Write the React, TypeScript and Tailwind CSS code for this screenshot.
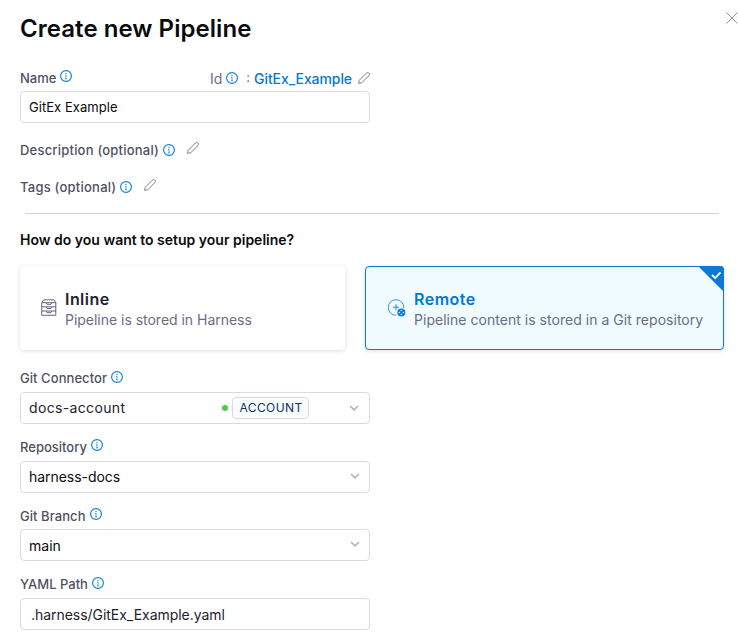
import type { ReactNode } from "react";

function Info() {
  return (
    <svg width="12" height="12" viewBox="0 0 12 12" fill="none" className="shrink-0">
      <circle cx="6" cy="6" r="5.4" stroke="#0e7fdc" strokeWidth="1.15" />
      <path d="M6 5V9M5 5.3H6M4.9 8.8H7.1" stroke="#3d97e3" strokeWidth="0.9" />
      <path d="M6 2.9V4.1" stroke="#2489de" strokeWidth="1.2" />
    </svg>
  );
}

function Pencil() {
  return (
    <svg width="12" height="12" viewBox="0 0 12 12" fill="none" stroke="#77778e" strokeWidth="0.95" strokeLinejoin="round" className="shrink-0">
      <path d="M0.6 11.4L1.2 8.3L8.4 1.1C9.1 0.4 10 0.4 10.6 0.9L11.1 1.4C11.7 2 11.7 2.8 11 3.5L3.8 10.7L0.6 11.4Z" />
    </svg>
  );
}

function Chevron() {
  return (
    <svg width="10" height="6" viewBox="0 0 10 6" fill="none" className="shrink-0">
      <path d="M1 1L5 4.8L9 1" stroke="#b0b1c4" strokeWidth="1.6" />
    </svg>
  );
}

function Drawers() {
  return (
    <svg width="16" height="17" viewBox="0 0 16 17" fill="none" stroke="#5c5e76" strokeWidth="0.95" className="mb-px shrink-0">
      <path d="M0.7 3.5L2.8 0.8H12.8L14.8 3.5V16.3H0.7Z" />
      <path d="M1 3.7H15M1 7.8H15M1 12H15" />
      <path d="M5.4 4L6 5.3H10L10.6 4M5.4 8L6 9.5H10L10.6 8M5.4 12.2L6 13.7H10L10.6 12.2" />
    </svg>
  );
}

function RemoteIcon() {
  return (
    <svg width="18" height="18" viewBox="0 0 18 18" fill="none" className="shrink-0">
      <path d="M8 16.3A7.8 7.8 0 1 1 15.8 9" stroke="#2788dc" strokeWidth="0.9" />
      <path d="M8 5.2V11.2M5 8.2H11" stroke="#2788dc" strokeWidth="1" />
      <circle cx="13.3" cy="13.5" r="4" fill="#0e78d5" />
      <g fill="#effbff">
        <circle cx="13.3" cy="11.4" r="0.75" />
        <circle cx="13.3" cy="15.6" r="0.75" />
        <circle cx="11.2" cy="13.5" r="0.75" />
        <circle cx="15.4" cy="13.5" r="0.75" />
      </g>
    </svg>
  );
}

function Label({ text, className }: { text: string; className: string }) {
  return (
    <div className="flex h-[18px] items-start text-[13px] leading-4 font-medium text-[#4f5162]">
      <span className={className}>{text}</span>
      <Info />
    </div>
  );
}

function Field({ children }: { children: ReactNode }) {
  return (
    <div className="flex h-8 w-[350px] shrink-0 items-center rounded border border-[#d9dae5] bg-white pl-2 text-[14px] text-[#0b0b0d]">
      {children}
    </div>
  );
}

export default function App() {
  return (
    <main className="h-[639px] w-[738px] overflow-hidden bg-white pl-5 font-['Inter',sans-serif] whitespace-nowrap">
      <header className="flex h-[69px] items-start justify-between">
        <h1 className="pt-[13px] text-[24px] leading-[32px] font-semibold tracking-[0.05px] text-[#0b0b0d]">Create new Pipeline</h1>
        <svg width="12" height="12" viewBox="0 0 12 12" className="mt-[12px]" stroke="#8384a0" strokeWidth="0.9">
          <path d="M0.5 0.5L11.5 11.5M11.5 0.5L0.5 11.5" />
        </svg>
      </header>

      <div className="flex h-[22px] w-[350px] items-start justify-between">
        <div className="mt-px flex">
          <Label text="Name" className="mr-1" />
        </div>
        <div className="flex h-[18px] items-center text-[13px] text-[#6b6d85]">
          <span className="mr-1 text-[14px]">Id</span>
          <Info />
          <span className="mr-1 ml-2">:</span>
          <span className="mr-[6px] text-[14px] font-medium tracking-[-0.08px] text-[#0278d5]">GitEx_Example</span>
          <Pencil />
        </div>
      </div>
      <Field>
        <span className="pt-0.5 text-[13px] tracking-[0.05px]">GitEx Example</span>
      </Field>

      <div className="mt-[19px] flex h-[18px] items-center text-[13px] font-medium text-[#4f5162]">
        <span className="mr-1 tracking-[0.21px]">Description (optional)</span>
        <span className="mb-0.5"><Info /></span>
        <span className="mb-[6px] ml-3"><Pencil /></span>
      </div>
      <div className="mt-[19px] flex h-[18px] items-center text-[13px] font-medium text-[#4f5162]">
        <span className="mr-1 tracking-[0.23px]">Tags (optional)</span>
        <span className="mb-0.5"><Info /></span>
        <span className="mb-[6px] ml-3"><Pencil /></span>
      </div>

      <div className="mt-[16px] ml-[5px] h-px w-[694px] bg-[#d5d5d5]" />
      <h2 className="mt-[17px] text-[14px] leading-[18px] font-semibold text-[#0b0b0d]">How do you want to setup your pipeline?</h2>

      <div className="mt-[17px] flex gap-5">
        <section className="flex h-[84px] w-[325px] items-center rounded bg-white pl-[21px] shadow-[0_1px_4px_rgba(40,41,61,0.16)]">
          <Drawers />
          <div className="mt-0.5 ml-2">
            <div className="text-[16px] leading-[22px] font-semibold tracking-[0.45px] text-[#22222a]">Inline</div>
            <div className="text-[14px] leading-5 tracking-[-0.02px] text-[#6b6d85]">Pipeline is stored in Harness</div>
          </div>
        </section>
        <section className="relative flex h-[84px] w-[359px] items-center rounded border border-[#0e78d5] bg-[#effbff] pl-[22px] shadow-[0_1px_4px_rgba(40,41,61,0.16)]">
          <RemoteIcon />
          <div className="mt-0.5 ml-2">
            <div className="text-[16px] leading-[22px] font-semibold tracking-[0.5px] text-[#0278d5]">Remote</div>
            <div className="text-[14px] leading-5 tracking-[0.03px] text-[#6b6d85]">Pipeline content is stored in a Git repository</div>
          </div>
          <svg width="26" height="26" viewBox="0 0 26 26" className="absolute -top-px -right-px">
            <path d="M0 0H22Q26 0 26 4V26Z" fill="#0e78d5" />
            <path d="M14 9L17.2 12L22.5 6.3" fill="none" stroke="white" strokeWidth="1.8" />
          </svg>
        </section>
      </div>

      <div className="mt-[21px] mb-[3px]">
        <Label text="Git Connector" className="-mt-px mr-1 tracking-[0.06px]" />
      </div>
      <Field>
        <span className="w-[193px] pb-0.5 tracking-[0.35px] text-[#22222a]">docs-account</span>
        <span className="mr-1 h-1.5 w-1.5 rounded-full bg-[#4dc952]" />
        <span className="flex h-[22px] w-[77px] items-center justify-center rounded border border-[#d9dae5] bg-[#fafbfc] pl-px text-[12px] tracking-[0.4px] text-[#07366c]">ACCOUNT</span>
        <span className="ml-10"><Chevron /></span>
      </Field>

      <div className="mt-[15px] mb-1">
        <Label text="Repository" className="mr-1" />
      </div>
      <Field>
        <span className="w-[321px] pb-0.5 tracking-[-0.05px]">harness-docs</span>
        <span className="mb-0.5"><Chevron /></span>
      </Field>

      <div className="mt-[15px] mb-[3px]">
        <Label text="Git Branch" className="mr-1 tracking-[0.06px]" />
      </div>
      <Field>
        <span className="w-[321px]">main</span>
        <span className="mb-0.5"><Chevron /></span>
      </Field>

      <div className="mt-[16px] mb-[3px]">
        <Label text="YAML Path" className="-mt-px mr-1" />
      </div>
      <Field>
        <span className="ml-0.5 tracking-[-0.04px] text-[#22222a]">.harness/GitEx_Example.yaml</span>
      </Field>
    </main>
  );
}
